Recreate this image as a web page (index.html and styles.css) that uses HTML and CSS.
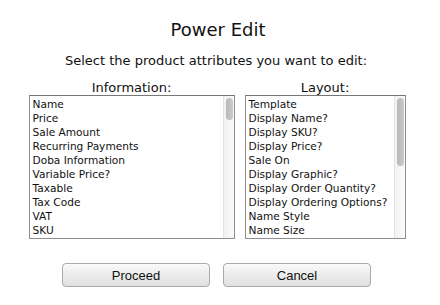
FILE: index.html
```html
<!DOCTYPE html>
<html>
<head>
<meta charset="utf-8">
<link rel="stylesheet" href="styles.css">
</head>
<body>
<div class="dialog">
  <h1 class="title">Power Edit</h1>
  <p class="subtitle">Select the product attributes you want to edit:</p>
  <div class="columns">
    <div class="col col-info">
      <div class="label">Information:</div>
      <div class="listbox">
        <ul class="items">
          <li>Name</li>
          <li>Price</li>
          <li>Sale Amount</li>
          <li>Recurring Payments</li>
          <li>Doba Information</li>
          <li>Variable Price?</li>
          <li>Taxable</li>
          <li>Tax Code</li>
          <li>VAT</li>
          <li>SKU</li>
        </ul>
        <div class="scrollbar"><div class="thumb thumb-short"></div></div>
      </div>
    </div>
    <div class="col col-layout">
      <div class="label">Layout:</div>
      <div class="listbox">
        <ul class="items">
          <li>Template</li>
          <li>Display Name?</li>
          <li>Display SKU?</li>
          <li>Display Price?</li>
          <li>Sale On</li>
          <li>Display Graphic?</li>
          <li>Display Order Quantity?</li>
          <li>Display Ordering Options?</li>
          <li>Name Style</li>
          <li>Name Size</li>
        </ul>
        <div class="scrollbar"><div class="thumb thumb-long"></div></div>
      </div>
    </div>
  </div>
  <div class="buttons">
    <button class="btn">Proceed</button>
    <button class="btn">Cancel</button>
  </div>
</div>
</body>
</html>
```
FILE: styles.css
```css
html, body {
  margin: 0;
  padding: 0;
  background: #ffffff;
}
body {
  width: 440px;
  height: 305px;
  overflow: hidden;
  font-family: "DejaVu Sans", Verdana, sans-serif;
  color: #111;
}
.dialog {
  display: flex;
  flex-direction: column;
  align-items: center;
}
.title {
  margin: 19px 4px 0 0;
  font-size: 18px;
  line-height: 22px;
  font-weight: normal;
  color: #111;
}
.subtitle {
  margin: 12px 8px 0 0;
  font-size: 13px;
  line-height: 16px;
}
.columns {
  display: flex;
  gap: 10px;
  margin-top: 11px;
  width: 377px;
  margin-left: -6px;
}
.col-info { width: 206px; }
.col-layout { width: 161px; }
.label {
  text-align: center;
  font-size: 13px;
  line-height: 15px;
  height: 15px;
}
.listbox {
  display: flex;
  height: 142px;
  border: 1px solid #8e8e8e;
  border-top-color: #777;
  background: #fff;
  overflow: hidden;
}
.items {
  list-style: none;
  margin: 0;
  padding: 1px 0 0 3px;
  flex: 1;
  font-size: 10.6px;
  line-height: 14px;
  white-space: nowrap;
  overflow: hidden;
}
.scrollbar {
  width: 11px;
  flex: none;
  border-left: 1px solid #e4e4e4;
  background: linear-gradient(to right, #f2f2f2, #fbfbfb);
  padding: 2px 0 0 2px;
  box-sizing: border-box;
}
.thumb {
  width: 7px;
  border-radius: 4px;
  background: linear-gradient(to right, #b8b8b8, #cacaca);
}
.thumb-short { height: 22px; }
.thumb-long { height: 68px; }
.buttons {
  display: flex;
  gap: 13px;
  margin-top: 24px;
  margin-left: -7px;
}
.btn {
  width: 148px;
  height: 24px;
  border: 1px solid #a9a9a9;
  border-radius: 4px;
  background: linear-gradient(to bottom, #fafafa 0%, #ececec 50%, #e0e0e0 100%);
  font-family: "Liberation Sans", Arial, sans-serif;
  font-size: 13px;
  color: #111;
  padding: 0;
}
```
